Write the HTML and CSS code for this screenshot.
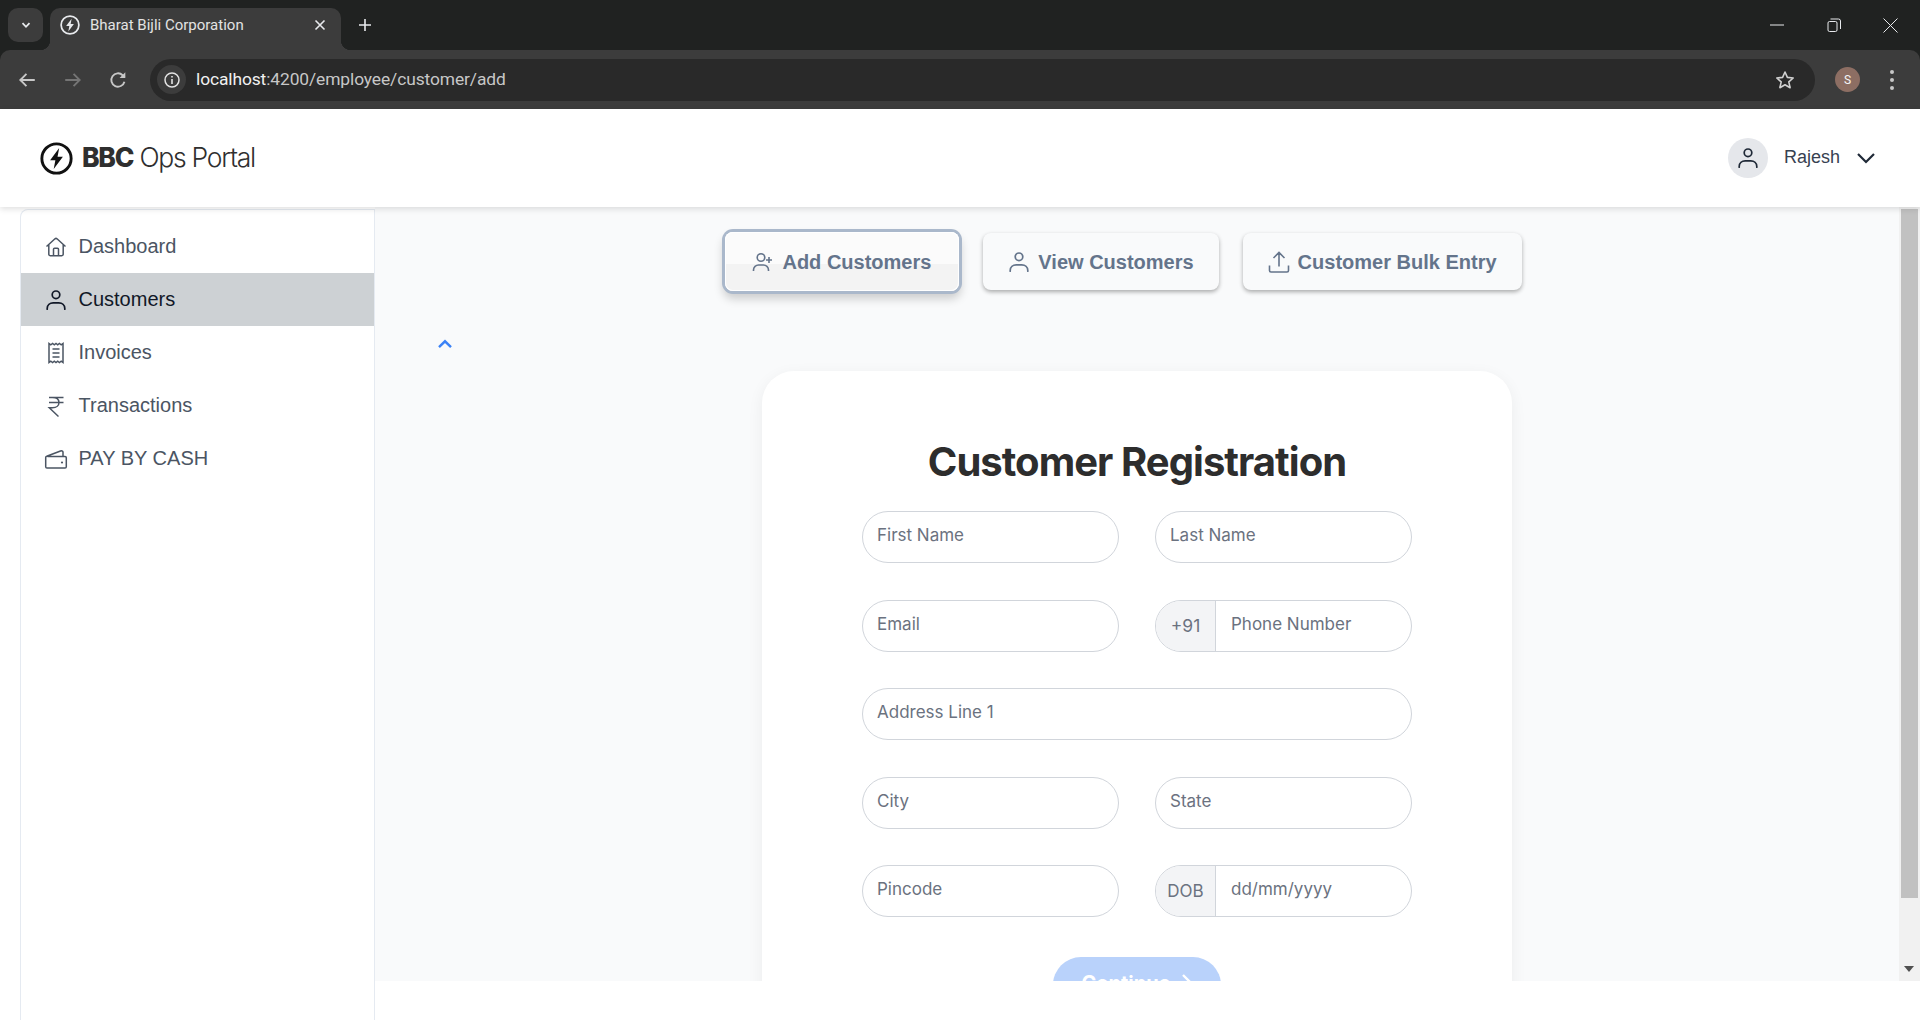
FILE: index.html
```html
<!DOCTYPE html>
<html lang="en">
<head>
<meta charset="utf-8">
<title>Bharat Bijli Corporation</title>
<link rel="stylesheet" href="styles.css">
</head>
<body>
<svg class="defs" width="0" height="0" aria-hidden="true">
  <symbol id="bolt" viewBox="0 0 32 32">
    <circle cx="16" cy="16" r="14.2" fill="none" stroke="currentColor" stroke-width="2.8"/>
    <path d="M18.6 5.8 9.8 17.6h5.1l-1.6 8.6 8.9-12h-5.2z" fill="currentColor"/>
  </symbol>
  <symbol id="user" viewBox="0 0 24 24">
    <circle cx="12" cy="6.8" r="3.8" fill="none" stroke="currentColor" stroke-width="1.7"/>
    <path d="M3.2 21.2v-.7c0-3.3 2.7-5.6 6-5.6h5.6c3.3 0 6 2.3 6 5.6v.7" fill="none" stroke="currentColor" stroke-width="1.7" stroke-linecap="round"/>
  </symbol>
</svg>

<div class="browser">
  <div class="tabstrip">
    <div class="tab-search">
      <svg width="12" height="12" viewBox="0 0 12 12"><path d="M2.5 4.2 6 7.8l3.5-3.6" fill="none" stroke="#e8eaed" stroke-width="1.8"/></svg>
    </div>
    <div class="tab">
      <svg class="favicon" width="20" height="20"><use href="#bolt"/></svg>
      <span class="tab-title">Bharat Bijli Corporation</span>
      <svg class="tab-close" width="12" height="12" viewBox="0 0 12 12"><path d="M1.5 1.5l9 9M10.5 1.5l-9 9" stroke="#e8eaed" stroke-width="1.6"/></svg>
    </div>
    <svg class="new-tab" width="14" height="14" viewBox="0 0 14 14"><path d="M7 1v12M1 7h12" stroke="#e8eaed" stroke-width="1.6"/></svg>
    <div class="window-controls">
      <div class="win-btn"><svg width="14" height="14" viewBox="0 0 14 14"><path d="M0 7h14" stroke="#e8eaed"/></svg></div>
      <div class="win-btn"><svg width="14" height="14" viewBox="0 0 14 14"><rect x="1" y="3.5" width="9" height="10" rx="1.5" fill="none" stroke="#e8eaed"/><path d="M3.5 1H11.5a2 2 0 0 1 2 2v8" fill="none" stroke="#e8eaed"/></svg></div>
      <div class="win-btn"><svg width="15" height="15" viewBox="0 0 15 15"><path d="M.5.5l14 14M14.5.5l-14 14" stroke="#e8eaed"/></svg></div>
    </div>
  </div>
  <div class="toolbar">
    <div class="nav-btn"><svg width="20" height="20" viewBox="0 0 18 18"><path d="M16 9H3M8.5 3.5 3 9l5.5 5.5" fill="none" stroke="#c7c7c7" stroke-width="1.7"/></svg></div>
    <div class="nav-btn"><svg width="20" height="20" viewBox="0 0 18 18"><path d="M2 9h13M9.5 3.5 15 9l-5.5 5.5" fill="none" stroke="#757575" stroke-width="1.7"/></svg></div>
    <div class="nav-btn"><svg width="20" height="20" viewBox="0 0 18 18"><path d="M14.8 10.5A6 6 0 1 1 13.2 4.7L15 6.3" fill="none" stroke="#c7c7c7" stroke-width="1.7"/><path d="M15.6 2v5.2h-5.2z" fill="#c7c7c7"/></svg></div>
    <div class="omnibox">
      <div class="info-chip"><svg width="18" height="18" viewBox="0 0 18 18"><circle cx="9" cy="9" r="7" fill="none" stroke="#e3e3e3" stroke-width="1.5"/><path d="M9 8v5M9 5v1.6" stroke="#e3e3e3" stroke-width="1.6"/></svg></div>
      <span class="url"><span class="url-host">localhost</span>:4200/employee/customer/add</span>
      <svg class="star" width="20" height="20" viewBox="0 0 20 20"><path d="m10 2 2.4 5.4 5.8.6-4.4 3.9 1.3 5.8L10 14.7l-5.100 3 1.300-5.800L1.800 8l5.800-.6z" fill="none" stroke="#d0d0d0" stroke-width="1.600" stroke-linejoin="round"/></svg>
    </div>
    <div class="profile">S</div>
    <div class="menu-dots"><i></i><i></i><i></i></div>
  </div>
</div>

<header class="app-header">
  <div class="brand">
    <svg class="brand-logo" width="33" height="33"><use href="#bolt"/></svg>
    <span class="brand-name"><b>BBC</b> Ops Portal</span>
  </div>
  <div class="account">
    <div class="account-avatar"><svg width="24" height="24"><use href="#user"/></svg></div>
    <span class="account-name">Rajesh</span>
    <svg class="account-chevron" width="20" height="12" viewBox="0 0 20 12"><path d="M2 2l8 8 8-8" fill="none" stroke="#1f2937" stroke-width="2.200"/></svg>
  </div>
</header>

<div class="layout">
  <nav class="sidebar">
    <a class="nav-item">
      <svg class="nav-icon" viewBox="0 0 24 24"><path d="M2.500 11.500 11 3.800c.6-.5 1.400-.5 2 0l8.500 7.700M4.800 9.500v9.800c0 .8.600 1.400 1.400 1.400h11.600c.8 0 1.400-.6 1.400-1.400V9.500M9.500 20.700v-6.500c0-.6.400-1 1-1h3c.6 0 1 .4 1 1v6.500" fill="none" stroke="currentColor" stroke-width="1.500" stroke-linejoin="round"/></svg>
      <span>Dashboard</span>
    </a>
    <a class="nav-item nav-item-active">
      <svg class="nav-icon"><use href="#user"/></svg>
      <span>Customers</span>
    </a>
    <a class="nav-item">
      <svg class="nav-icon" viewBox="0 0 24 24"><path d="M5 2.500v19l1.800-1.300 1.800 1.300 1.700-1.300 1.700 1.300 1.700-1.300 1.700 1.300 1.800-1.300 1.800 1.300v-19l-1.800 1.300-1.800-1.300-1.700 1.300-1.700-1.300-1.700 1.300-1.700-1.300-1.800 1.300zM8.500 8h7M8.500 12h7M8.500 16h7" fill="none" stroke="currentColor" stroke-width="1.500"/></svg>
      <span>Invoices</span>
    </a>
    <a class="nav-item">
      <svg class="nav-icon" viewBox="0 0 24 24"><path d="M5 3.500h14.500M5 8.500h14.500M8.500 3.500c4 0 6.500 2 6.500 5s-2.500 5.300-6.500 5.300H5.300L14.500 22.500" fill="none" stroke="currentColor" stroke-width="1.500"/></svg>
      <span>Transactions</span>
    </a>
    <a class="nav-item">
      <svg class="nav-icon" viewBox="0 0 24 24"><path d="M3.500 9.500h17.500c.8 0 1.300.5 1.300 1.300v9c0 .8-.5 1.300-1.300 1.300H3c-.8 0-1.300-.5-1.300-1.300v-9.300c0-.6.400-1 1-1.200l13.800-5.300c1-.4 2.200-.1 2.500 1V9.500" fill="none" stroke="currentColor" stroke-width="1.500" stroke-linejoin="round"/><circle cx="18" cy="15.500" r="1.100" fill="currentColor"/></svg>
      <span>PAY BY CASH</span>
    </a>
  </nav>

  <div class="main">
    <main class="content">
      <div class="tabs">
        <button class="tab-btn tab-btn-active">
          <svg class="tab-icon" viewBox="0 0 24 24"><circle cx="10" cy="7.500" r="3.800" fill="none" stroke="currentColor" stroke-width="1.600"/><path d="M2.500 21v-1c0-3 2.500-5 5-5h5c2.500 0 5 2 5 5v1M18 7v6M15 10h6" fill="none" stroke="currentColor" stroke-width="1.600"/></svg>
          <span>Add Customers</span>
        </button>
        <button class="tab-btn">
          <svg class="tab-icon"><use href="#user"/></svg>
          <span>View Customers</span>
        </button>
        <button class="tab-btn">
          <svg class="tab-icon" viewBox="0 0 24 24"><path d="M2.500 15.500v5c0 .8.700 1.500 1.500 1.500h16c.8 0 1.500-.7 1.500-1.500v-5M12 16.500V2.800M6.500 8 12 2.500 17.500 8" fill="none" stroke="currentColor" stroke-width="1.600"/></svg>
          <span>Customer Bulk Entry</span>
        </button>
      </div>

      <svg class="collapse" width="16" height="10" viewBox="0 0 16 10"><path d="M2 8.200 8 2.300l6 5.900" fill="none" stroke="#3b82f6" stroke-width="2.400"/></svg>

      <section class="card">
        <h1 class="card-title">Customer Registration</h1>
        <form class="form-grid">
          <input class="field" placeholder="First Name">
          <input class="field" placeholder="Last Name">
          <input class="field" placeholder="Email">
          <div class="field-group">
            <span class="addon">+91</span>
            <input class="field-inner" placeholder="Phone Number">
          </div>
          <input class="field field-wide" placeholder="Address Line 1">
          <input class="field" placeholder="City">
          <input class="field" placeholder="State">
          <input class="field" placeholder="Pincode">
          <div class="field-group">
            <span class="addon addon-dob">DOB</span>
            <input class="field-inner" placeholder="dd/mm/yyyy">
          </div>
        </form>
        <button class="continue" type="button">
          <span>Continue</span>
          <svg width="12" height="20" viewBox="0 0 12 20"><path d="M2 2l8 8-8 8" fill="none" stroke="#fff" stroke-width="2.400"/></svg>
        </button>
      </section>
    </main>
    <div class="scrollbar">
      <div class="scroll-thumb"></div>
      <div class="scroll-arrow"></div>
    </div>
  </div>
</div>
</body>
</html>
```
FILE: styles.css
```css
* { box-sizing: border-box; }
html, body { height: 100%; }
body {
  margin: 0;
  height: 1020px;
  overflow: hidden;
  background: #fff;
  font-family: "Liberation Sans", Arial, sans-serif;
  display: flex;
  flex-direction: column;
}
.defs { position: absolute; }

/* browser chrome */
.browser { flex: none; height: 109px; background: #202221; }
.tabstrip { height: 50px; display: flex; align-items: flex-start; padding: 8px 0 0 8px; }
.tab-search {
  width: 35px; height: 34px; border-radius: 10px; background: #3c3c3c;
  display: flex; align-items: center; justify-content: center;
}
.tab {
  position: relative; width: 291px; height: 42px; margin-left: 7px; padding: 0 15px 8px 10px;
  background: #3c3c3c; border-radius: 10px 10px 0 0; color: #e8eaed;
  display: flex; align-items: center;
}
.tab::before, .tab::after {
  content: ""; position: absolute; bottom: 0; width: 10px; height: 10px;
}
.tab::before { left: -10px; background: radial-gradient(circle at 0 0, transparent 10px, #3c3c3c 10.500px); }
.tab::after { right: -10px; background: radial-gradient(circle at 100% 0, transparent 10px, #3c3c3c 10.500px); }
.favicon { flex: none; color: #e8eaed; }
.tab-title { margin-left: 10px; flex: 1; font: 15px Roboto, sans-serif; color: #e3e3e3; white-space: nowrap; }
.tab-close { flex: none; }
.new-tab { margin: 10px 0 0 17px; }
.window-controls { margin-left: auto; padding-right: 1px; display: flex; margin-top: -8px; }
.win-btn { width: 57px; height: 50px; display: flex; align-items: center; justify-content: center; }

.toolbar {
  height: 59px; background: #3c3c3c; border-radius: 10px 10px 0 0;
  display: flex; align-items: center; padding: 0 18px 0 10px;
}
.nav-btn { flex: none; width: 34px; height: 34px; margin-right: 11px; display: flex; align-items: center; justify-content: center; }
.nav-btn:nth-child(2) { margin-right: 11px; margin-left: 1px; }
.nav-btn:nth-child(3) { margin-right: 15px; }
.omnibox {
  flex: 1; height: 42px; background: #292929; border-radius: 21px; padding: 0 20px 0 7px;
  display: flex; align-items: center;
}
.info-chip {
  flex: none; width: 29px; height: 29px; border-radius: 50%; background: #3c3c3c;
  display: flex; align-items: center; justify-content: center;
}
.url { margin: -1px 0 0 10px; flex: 1; font: 17.400px Roboto, sans-serif; color: #c7c7c7; white-space: nowrap; letter-spacing: -.1px; }
.url-host { color: #f1f1f1; }
.star { flex: none; }
.profile {
  flex: none; width: 25px; height: 25px; margin-left: 20px; border-radius: 50%; background: #8d6e63;
  color: #f5f5f5; font: 12px Roboto, sans-serif; display: flex; align-items: center; justify-content: center;
}
.menu-dots { flex: none; width: 20px; margin-left: 22px; display: flex; flex-direction: column; align-items: center; gap: 4px; }
.menu-dots i { width: 4px; height: 4px; border-radius: 50%; background: #c7c7c7; }

/* app header */
.app-header {
  flex: none; position: relative; z-index: 2; height: 98px; background: #fff;
  box-shadow: 0 2px 6px rgba(0, 0, 0, .13);
  display: flex; align-items: center; justify-content: space-between; padding: 0 44px 0 40px;
}
.brand { display: flex; align-items: center; gap: 10px; }
.brand-logo { color: #111; }
.brand-name { font: 300 26.500px Inter, sans-serif; color: #2f2f2f; letter-spacing: -1.250px; margin: -2px 0 0 -1px; }
.brand-name b { font-weight: 800; }
.account { display: flex; align-items: center; }
.account-avatar {
  width: 40px; height: 40px; border-radius: 50%; background: #e5e7eb; color: #1f2937;
  display: flex; align-items: center; justify-content: center;
}
.account-name { margin: -2px 0 0 16px; font: 18px "Liberation Sans", sans-serif; color: #374151; }
.account-chevron { margin-left: 16px; }

/* layout */
.layout { flex: 1; min-height: 0; display: flex; padding-left: 20px; }
.sidebar {
  flex: none; width: 355px; margin-top: 2px; padding-top: 10px; background: #fff;
  border: 1px solid #e5eaf1; border-width: 1px 1px 0 1px; border-radius: 8px 0 0 0;
}
.nav-item {
  height: 53px; padding-left: 23px; display: flex; align-items: center; gap: 10.500px;
  font-size: 20px; color: #4b5563;
}
.nav-item span { margin-top: -1px; }
.nav-item-active { background: #cdd1d4; color: #111827; }
.nav-icon { width: 24px; height: 24px; flex: none; }

.main { flex: 1; min-width: 0; height: 774px; display: flex; background: #f9fafb; }
.content { flex: 1; min-width: 0; overflow: hidden; display: flex; flex-direction: column; }
.tabs { flex: none; height: 57px; display: flex; justify-content: center; align-items: center; gap: 24px; margin-top: 26px; padding-right: 27px; }
.tab-btn {
  height: 57px; padding: 0 25px; border: 0; border-radius: 8px; background: #f9fafb;
  box-shadow: 0 2px 4px rgba(0, 0, 0, .32);
  display: flex; align-items: center; gap: 6px;
  font: 700 20px "Liberation Sans", sans-serif; color: #64748b;
}
.tab-btn span { margin: 2px 0 0 1px; }
.tab-icon { width: 24px; height: 24px; flex: none; margin-left: -1px; }
.tab-btn-active {
  height: 59px; padding: 0 28px 0 27px;
  background: linear-gradient(#fbfbfb 0 55%, #f3f3f3 55% 100%);
  box-shadow: inset 0 0 0 1px #fff, 0 0 0 3px #aab8cb, 0 6px 10px 2px rgba(0, 0, 0, .18);
}
.collapse { flex: none; margin: 49px 0 0 62px; }
.card {
  flex: none; width: 750px; margin: 22px auto 0; padding: 71px 100px 40px; background: #fff;
  border-radius: 32px; box-shadow: 0 4px 16px rgba(0, 0, 0, .06);
  display: flex; flex-direction: column; align-items: stretch;
}
.card-title {
  margin: 0 0 29px; text-align: center; font: 700 40px/1 Inter, sans-serif; color: #2d2d2d; letter-spacing: -.950px;
  height: 40px; white-space: nowrap;
}
.form-grid { display: grid; grid-template-columns: 257px 257px; column-gap: 36px; row-gap: 36.500px; }
.field, .field-group {
  height: 52px; border: 1px solid #d1d5db; border-radius: 26px; background: #fff;
}
.field {
  width: 100%; padding: 0 14px 4px; font: 17px Inter, sans-serif; color: #374151; outline: 0;
}
.field-wide { grid-column: span 2; }
.field-group { display: flex; overflow: hidden; }
.addon {
  flex: none; width: 60px; background: #f3f4f6; border-right: 1px solid #d1d5db;
  display: flex; align-items: center; justify-content: center;
  font: 17.500px Inter, sans-serif; color: #6b7280;
}
.addon-dob { font-size: 17px; }
.field-inner {
  flex: 1; min-width: 0; border: 0; padding: 0 14px 4px 15px; font: 17px Inter, sans-serif; color: #374151; outline: 0; background: none;
}
.field::placeholder, .field-inner::placeholder { color: #6b7280; opacity: 1; }
.continue {
  align-self: center; flex: none; width: 168px; height: 56px; margin-top: 40px; padding: 0 0 4px; border: 0; border-radius: 28px;
  background: #b9d2fb; color: #fff; font: 700 20px Inter, sans-serif;
  display: flex; align-items: center; justify-content: center; gap: 10px;
}
.scrollbar { flex: none; width: 21px; background: #f1f1f1; position: relative; padding: 2px 2px 0; }
.scroll-thumb { height: 689px; background: #c1c1c1; }
.scroll-arrow {
  position: absolute; left: 5px; bottom: 9px; width: 0; height: 0;
  border-left: 5px solid transparent; border-right: 5px solid transparent; border-top: 6px solid #505050;
}
```
